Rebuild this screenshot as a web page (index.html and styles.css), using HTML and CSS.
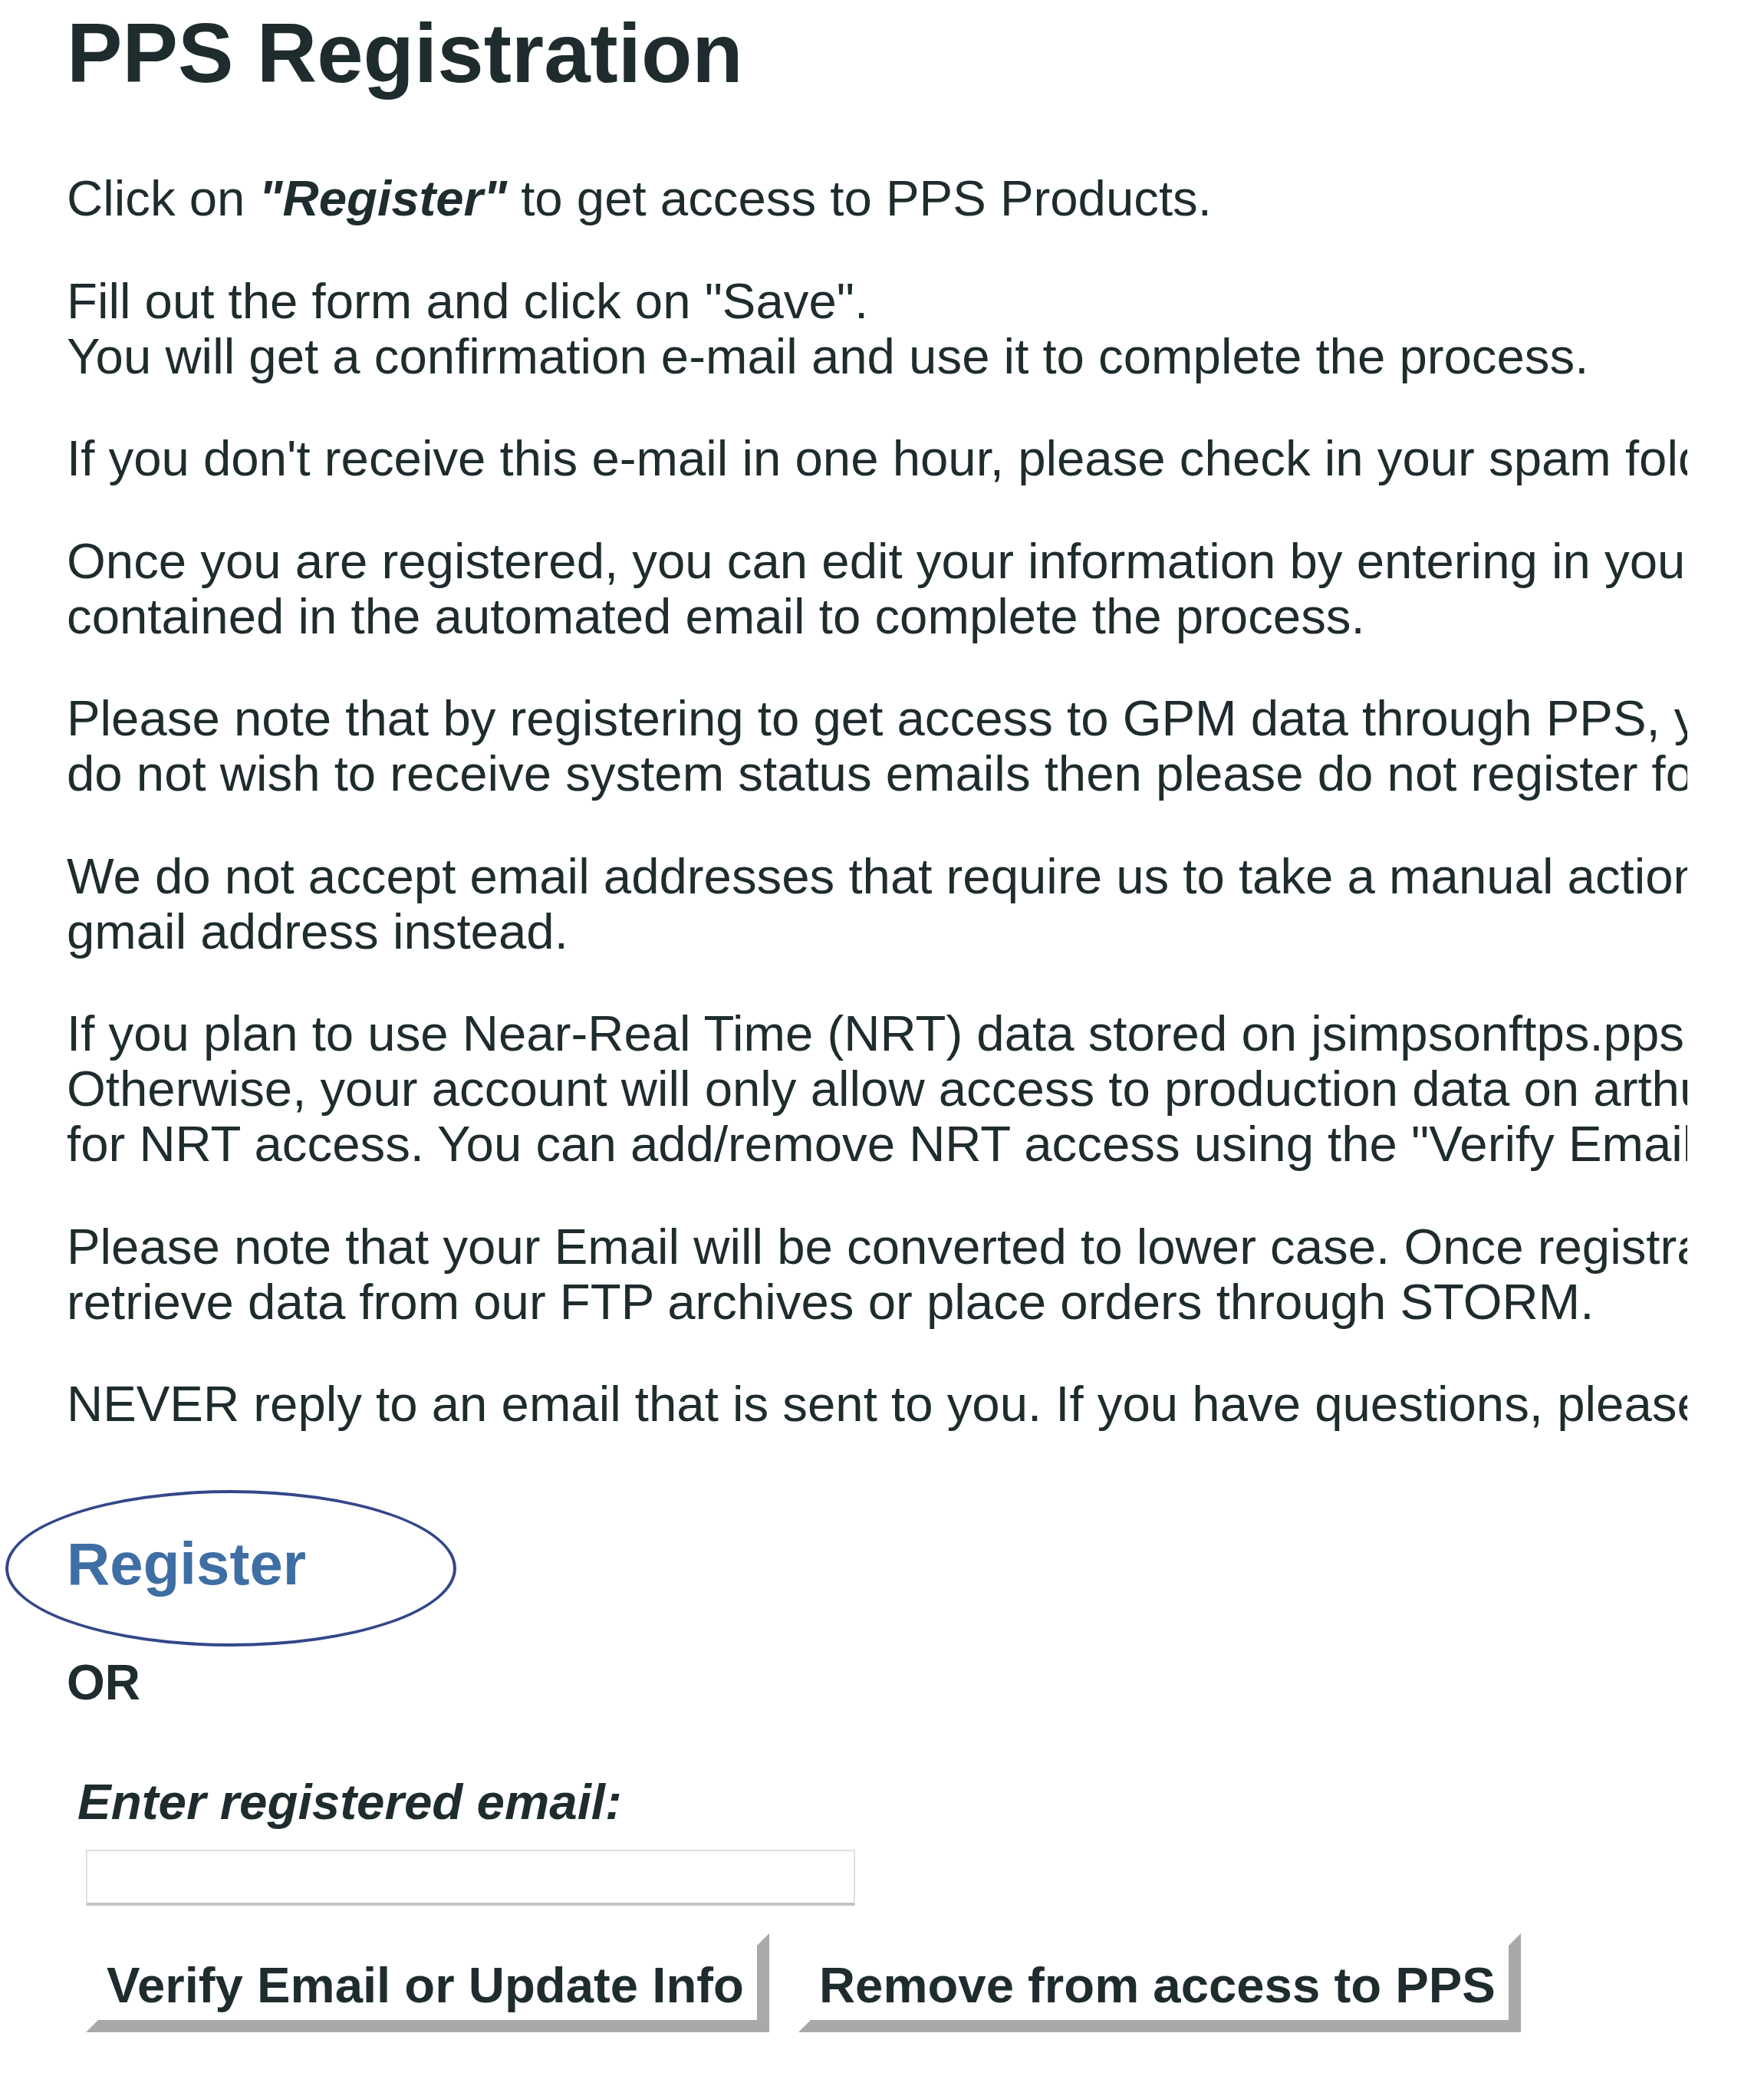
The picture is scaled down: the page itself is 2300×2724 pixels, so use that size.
FILE: index.html
```html
<!DOCTYPE html>
<html lang="en">
<head>
<meta charset="utf-8">
<title>PPS Registration</title>
<link rel="stylesheet" href="styles.css">
</head>
<body>
<main class="page">
  <h1 class="title">PPS Registration</h1>

  <div class="notes">
    <p>Click on <strong class="em-strong">"Register"</strong> to get access to PPS Products.</p>
    <p>Fill out the form and click on "Save".<br>You will get a confirmation e-mail and use it to complete the process.</p>
    <p>If you don't receive this e-mail in one hour, please check in your spam folder.</p>
    <p>Once you are registered, you can edit your information by entering in your email below and clicking on the link<br>contained in the automated email to complete the process.</p>
    <p>Please note that by registering to get access to GPM data through PPS, you will be added to our mailing list. If you<br>do not wish to receive system status emails then please do not register for access.</p>
    <p>We do not accept email addresses that require us to take a manual action to receive emails. Please use a<br>gmail address instead.</p>
    <p>If you plan to use Near-Real Time (NRT) data stored on jsimpsonftps.pps.eosdis.nasa.gov, please check the NRT box.<br>Otherwise, your account will only allow access to production data on arthurhou.pps.eosdis.nasa.gov. Please register<br>for NRT access. You can add/remove NRT access using the "Verify Email or Update Info" button.</p>
    <p>Please note that your Email will be converted to lower case. Once registration is complete, you will be able to<br>retrieve data from our FTP archives or place orders through STORM.</p>
    <p>NEVER reply to an email that is sent to you. If you have questions, please contact PPS Help.</p>
  </div>

  <div class="register-wrap">
    <a class="register-link" href="#">Register</a>
    <span class="ring" aria-hidden="true"></span>
  </div>

  <div class="or">OR</div>

  <form class="lookup" onsubmit="return false;">
    <label class="lookup-label" for="email">Enter registered email:</label>
    <input class="lookup-input" id="email" type="text">
    <div class="actions">
      <button class="bevel-btn" type="button">Verify Email or Update Info</button>
      <button class="bevel-btn" type="button">Remove from access to PPS</button>
    </div>
  </form>
</main>
</body>
</html>
```

FILE: styles.css
```css
html, body {
  margin: 0;
  padding: 0;
  background: #ffffff;
}

body {
  font-family: "Liberation Sans", Arial, Helvetica, sans-serif;
  color: #1f2c2e;
}

.page {
  padding: 8px 0 60px 87px;
}

.title {
  margin: 0;
  font-size: 108.7px;
  line-height: 123px;
  font-weight: bold;
  color: #1f2c2e;
}

.notes {
  margin-top: 92px;
  width: 2113px;
  overflow: hidden;
  white-space: nowrap;
  font-size: 65.35px;
  line-height: 72px;
}

.notes p {
  margin: 0 0 61.5px 0;
}

.notes p:last-child {
  margin-bottom: 0;
}

.em-strong {
  font-weight: bold;
  font-style: italic;
}

.register-wrap {
  position: relative;
  margin-top: 128px;
  height: 88px;
}

.register-link {
  font-size: 78px;
  line-height: 88px;
  font-weight: bold;
  color: #3e6ea3;
  text-decoration: none;
}

.ring {
  position: absolute;
  left: -80px;
  top: -52px;
  width: 588px;
  height: 204px;
  box-sizing: border-box;
  border: 4px solid #34478a;
  border-radius: 50%;
  pointer-events: none;
}

.or {
  margin-top: 75px;
  font-size: 64px;
  line-height: 72px;
  font-weight: bold;
}

.lookup {
  margin: 84px 0 0 0;
}

.lookup-label {
  display: block;
  padding-left: 14px;
  font-size: 65.5px;
  line-height: 72px;
  font-weight: bold;
  font-style: italic;
}

.lookup-input {
  display: block;
  box-sizing: border-box;
  margin: 26px 0 0 25px;
  width: 1003px;
  height: 73px;
  border: 2px solid #e0e0e0;
  border-bottom: 4px solid #c4c4c4;
  background: #ffffff;
  padding: 0 10px;
  font-size: 40px;
  font-family: inherit;
}

.actions {
  display: flex;
  gap: 38px;
  margin: 36px 0 0 25px;
}

.bevel-btn {
  font-family: "Liberation Sans", Arial, Helvetica, sans-serif;
  font-size: 65.3px;
  line-height: 72px;
  font-weight: bold;
  color: #1f2c2e;
  background: #ffffff;
  border-style: solid;
  border-width: 16px;
  border-color: #ffffff #a9a9a9 #a9a9a9 #ffffff;
  padding: 16px 17px 9px 11px;
  margin: 0;
  cursor: pointer;
}
```
